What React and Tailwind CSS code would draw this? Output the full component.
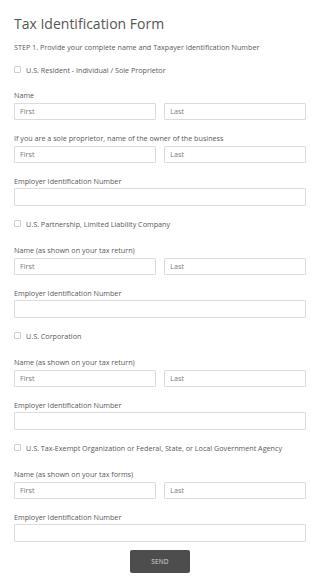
const font = { fontFamily: '"Open Sans", "Liberation Sans", sans-serif' };

function Label({ children, className = '' }) {
  return <div className={`text-[7.2px] leading-[10px] text-[#5a5a5a] mb-[2.5px] ${className}`}>{children}</div>;
}

function TextInput({ placeholder = '' }) {
  return (
    <input
      type="text"
      placeholder={placeholder}
      className="block w-full h-[17.5px] border border-[#dcdcdc] rounded-[1px] bg-white px-[5px] text-[7.2px] text-[#555] placeholder:text-[#7a7a7a] outline-none"
    />
  );
}

function NameRow({ label, className }) {
  return (
    <div className={className}>
      <Label>{label}</Label>
      <div className="grid grid-cols-2 gap-[8.5px]">
        <TextInput placeholder="First" />
        <TextInput placeholder="Last" />
      </div>
    </div>
  );
}

function Ein({ className = 'mt-[12.5px]' }) {
  return (
    <div className={className}>
      <Label>Employer Identification Number</Label>
      <TextInput />
    </div>
  );
}

function Check({ label, className }) {
  return (
    <label className={`flex items-center h-[10px] gap-[5px] ${className}`}>
      <span className="w-[7px] h-[7px] border border-[#cfcfcf] rounded-[1px] bg-white shrink-0" />
      <span className="text-[7.2px] leading-[10px] text-[#5a5a5a]">{label}</span>
    </label>
  );
}

export default function App() {
  return (
    <div style={font} className="bg-white w-[320px] min-h-[588px] px-[14px] pt-[14px]">
      <h1 className="text-[14px] leading-[20px] text-[#555] font-normal">Tax Identification Form</h1>
      <p className="mt-[7.5px] text-[7.2px] leading-[10px] text-[#5a5a5a]">
        STEP 1. Provide your complete name and Taxpayer Identification Number
      </p>

      <Check className="mt-[13px]" label="U.S. Resident - Individual / Sole Proprietor" />
      <NameRow className="mt-[15.5px]" label="Name" />
      <NameRow className="mt-[13px]" label="If you are a sole proprietor, name of the owner of the business" />
      <Ein />

      <Check className="mt-[13px]" label="U.S. Partnership, Limited Liability Company" />
      <NameRow className="mt-[16.5px]" label="Name (as shown on your tax return)" />
      <Ein />

      <Check className="mt-[13px]" label="U.S. Corporation" />
      <NameRow className="mt-[16.5px]" label="Name (as shown on your tax return)" />
      <Ein />

      <Check className="mt-[13px]" label="U.S. Tax-Exempt Organization or Federal, State, or Local Government Agency" />
      <NameRow className="mt-[16.5px]" label="Name (as shown on your tax forms)" />
      <Ein />

      <div className="flex justify-center mt-[8.5px]">
        <button
          type="button"
          className="w-[60px] h-[23px] bg-[#4d4d4d] rounded-[2px] text-[6.5px] text-[#d8d8d8] tracking-wide"
        >
          SEND
        </button>
      </div>
    </div>
  );
}
